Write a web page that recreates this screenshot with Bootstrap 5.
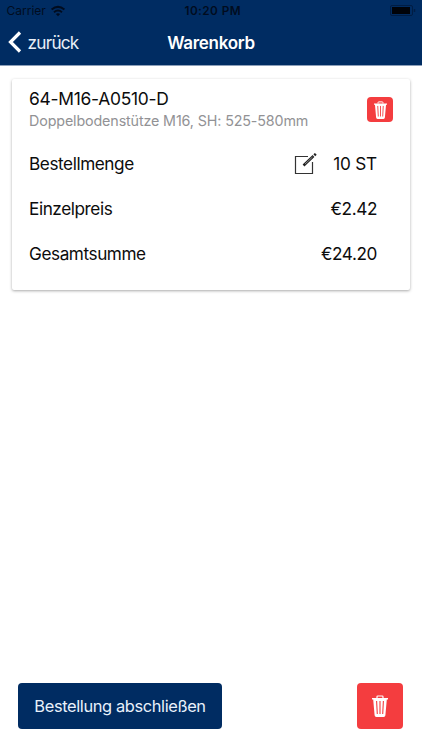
<!DOCTYPE html>
<html lang="de">
<head>
<meta charset="utf-8">
<meta name="viewport" content="width=device-width, initial-scale=1">
<title>Warenkorb</title>
<link href="https://cdn.jsdelivr.net/npm/bootstrap@5.3.0/dist/css/bootstrap.min.css" rel="stylesheet">
<style>
  body { font-family: Inter, "Liberation Sans", sans-serif; font-size: 17.2px; line-height: 24px; color: #0c0c0c; background: #fff; letter-spacing: -.2px; }
  .app-top { background: #002c62; height: 66px; border-bottom: 1px solid #8c9fb9; }
  .status-row { height: 22px; font-size: 12px; line-height: 22px; color: #000c1f; padding: 0 6px 0 6.5px; }
  .status-row .carrier { letter-spacing: 0; }
  .status-row .clock { font-weight: 600; font-size: 11.8px; letter-spacing: .42px; padding-left: 3px; }
  .title-row { height: 43px; color: #fff; padding-left: 8px; }
  .back-link { color: #e9f0f8; gap: 5.5px; font-size: 17.2px; letter-spacing: -.75px; }
  .back-link span { padding-top: 2px; }
  .screen-title { font-weight: 600; font-size: 17px; letter-spacing: -.3px; }
  .order-card { margin: 13px 12.5px 0 12px; height: 211px; padding: 8px 16.5px 0 17px; border-radius: 2px; box-shadow: 0 1px 3px rgba(0,0,0,.34); }
  .item-code { font-size: 17.4px; letter-spacing: -.25px; }
  .item-note { font-size: 14.3px; line-height: 19px; color: #929295; letter-spacing: -.13px; }
  .item-rows { padding-top: 11px; }
  .item-row { height: 45px; padding-right: 16px; }
  .item-label { letter-spacing: -.43px; }
  .item-price { letter-spacing: -.4px; }
  .delete-sm, .delete-lg { background: #f43d3f; border: 0; }
  .delete-sm { width: 26px; height: 25px; border-radius: 4px; margin-top: 10px; }
  .delete-lg { width: 46px; height: 46px; border-radius: 4px; }
  .submit-btn, .submit-btn:hover { background: #002c62; color: #e9f1fb; width: 204px; height: 46px; border-radius: 4px; font-size: 16.4px; letter-spacing: -.37px; border: 0; }
  .bottom-row { padding: 0 19px 21px 18px; }
</style>
<script src="https://cdn.jsdelivr.net/npm/bootstrap@5.3.0/dist/js/bootstrap.bundle.min.js"></script>
</head>
<body>
<svg class="d-none">
  <symbol id="trash" viewBox="0 0 16 22">
    <path d="M5 3V1.7Q5 1 5.8 1h4.4q.8 0 .8.7V3" fill="none" stroke="#fff" stroke-width="1.2"/>
    <path d="M0 3h16v1.4h-1.2L13.4 20.2Q13.3 22 11.6 22H4.4Q2.7 22 2.6 20.2L1.2 4.4H0z" fill="#fff"/>
    <path d="M4.6 6l.7 13M8 6v13M11.400 6l-.7 13" fill="none" stroke="#f43d3f" stroke-width="1.100"/>
  </symbol>
</svg>
<div class="d-flex flex-column vh-100">
  <header class="app-top flex-shrink-0">
    <div class="status-row row g-0 align-items-center">
      <div class="col d-flex align-items-center gap-1">
        <span class="carrier">Carrier</span>
        <svg width="16" height="12" viewBox="0 0 16 12" fill="none" stroke="#000c1f" stroke-width="2"><path d="M1.600 4.600Q8-.9 14.400 4.600M4 7.200q4-3.300 8 0"/><path d="M5.900 9q2.100-1.600 4.200 0L8 11.200z" fill="#000c1f" stroke="none"/></svg>
      </div>
      <div class="col-auto clock">10:20 PM</div>
      <div class="col d-flex justify-content-end">
        <svg width="26" height="12" viewBox="0 0 26 12"><rect x=".5" y=".5" width="22" height="10" rx="1.500" fill="none" stroke="#001d44"/><rect x="2" y="2" width="18" height="7" fill="#000309"/><path d="M24.500 4v3" stroke="#001d44" stroke-width="1.500"/></svg>
      </div>
    </div>
    <div class="title-row row g-0 align-items-center">
      <div class="col"><a href="#" class="back-link d-inline-flex align-items-center text-decoration-none">
        <svg width="14" height="22" viewBox="0 0 14 22"><path d="M12 1.500L2.500 11 12 20.500" fill="none" stroke="#fff" stroke-width="3.200"/></svg>
        <span>zurück</span></a></div>
      <h1 class="col-auto screen-title m-0">Warenkorb</h1>
      <div class="col pe-2"></div>
    </div>
  </header>

  <main class="flex-grow-1">
    <section class="order-card card border-0">
      <div class="d-flex justify-content-between align-items-start">
        <div>
          <div class="item-code">64-M16-A0510-D</div>
          <div class="item-note">Doppelbodenstütze M16, SH: 525-580mm</div>
        </div>
        <button class="btn delete-sm p-0 d-flex align-items-center justify-content-center" aria-label="Löschen"><svg width="13" height="18"><use href="#trash"/></svg></button>
      </div>
      <div class="item-rows">
        <div class="item-row d-flex align-items-center">
          <span class="item-label me-auto">Bestellmenge</span>
          <svg class="me-3" width="23" height="22" viewBox="0 0 23 22"><path d="M14 3.500H1.500v17h17V9" fill="none" stroke="#333" stroke-width="1.200"/><path d="M9.500 12.500L19.500 3" stroke="#222" stroke-width="2.600"/><path d="M11 11L18.500 4" stroke="#888" stroke-width="1"/><path d="M20.300 2.300L21.800 .9" stroke="#222" stroke-width="2.600"/></svg>
          <span>10 ST</span>
        </div>
        <div class="item-row d-flex align-items-center justify-content-between"><span class="item-label">Einzelpreis</span><span class="item-price">€2.42</span></div>
        <div class="item-row d-flex align-items-center justify-content-between"><span class="item-label">Gesamtsumme</span><span class="item-price">€24.20</span></div>
      </div>
    </section>
  </main>

  <footer class="bottom-row d-flex justify-content-between align-items-center">
    <button class="btn submit-btn p-0">Bestellung abschließen</button>
    <button class="btn delete-lg p-0 d-flex align-items-center justify-content-center" aria-label="Alles löschen"><svg width="16" height="22"><use href="#trash"/></svg></button>
  </footer>
</div>
</body>
</html>
